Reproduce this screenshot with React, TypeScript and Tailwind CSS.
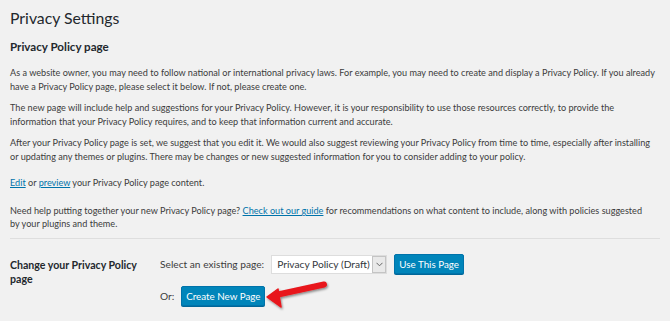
import React from 'react';

const font = { fontFamily: 'Lato, "Noto Sans", Arial, sans-serif' };

function RedArrow() {
  return (
    <svg
      className="absolute left-[262px] top-[278px]"
      width="72"
      height="34"
      viewBox="0 0 72 34"
    >
      <defs>
        <filter id="sh" x="-20%" y="-20%" width="140%" height="160%">
          <feDropShadow dx="1" dy="1.5" stdDeviation="0.8" floodColor="#000" floodOpacity="0.45" />
        </filter>
      </defs>
      <g filter="url(#sh)">
        <path d="M16 16.5 L62 6.5" stroke="#e8161b" strokeWidth="6" strokeLinecap="round" />
        <path d="M5 19 L16 11 L19 29 Z" fill="#e8161b" stroke="#e8161b" strokeWidth="1.5" strokeLinejoin="round" />
      </g>
    </svg>
  );
}

export default function App() {
  return (
    <div
      className="relative min-h-screen bg-[#f1f1f1] text-[#3c3c3c] pl-[10px] pr-[10px] pt-[8px] text-[9.15px] leading-[14px]"
      style={font}
    >
      <h1 className="text-[15.8px] leading-[20px] text-[#23282d]">Privacy Settings</h1>
      <h2 className="mt-[12px] text-[11.6px] leading-[14px] font-bold text-[#23282d]">
        Privacy Policy page
      </h2>

      <p className="mt-[12px] whitespace-nowrap">
        As a website owner, you may need to follow national or international privacy laws. For example, you may
        need to create and display a Privacy Policy. If you already
        <br />
        have a Privacy Policy page, please select it below. If not, please create one.
      </p>
      <p className="mt-[7px] whitespace-nowrap">
        The new page will include help and suggestions for your Privacy Policy. However, it is your responsibility
        to use those resources correctly, to provide the
        <br />
        information that your Privacy Policy requires, and to keep that information current and accurate.
      </p>
      <p className="mt-[7px] whitespace-nowrap">
        After your Privacy Policy page is set, we suggest that you edit it. We would also suggest reviewing your
        Privacy Policy from time to time, especially after installing
        <br />
        or updating any themes or plugins. There may be changes or new suggested information for you to consider
        adding to your policy.
      </p>
      <p className="mt-[12px] whitespace-nowrap">
        <a className="text-[#0073aa] underline">Edit</a> or{' '}
        <a className="text-[#0073aa] underline">preview</a> your Privacy Policy page content.
      </p>
      <p className="mt-[14px] whitespace-nowrap leading-[13px]">
        Need help putting together your new Privacy Policy page?{' '}
        <a className="text-[#0073aa] underline">Check out our guide</a> for recommendations on what content to
        include, along with policies suggested
        <br />
        by your plugins and theme.
      </p>

      <div className="mt-[8px] h-px bg-[#dedede]" />

      <div className="mt-[19px] flex">
        <div className="w-[150px] text-[10.6px] leading-[14px] font-bold text-[#23282d]">
          Change your Privacy Policy
          <br />
          page
        </div>
        <div className="flex flex-col">
          <div className="-mt-[4px] flex items-center">
            <span className="text-[10.2px]">Select an existing page:</span>
            <div className="ml-[7px] flex h-[19px] items-stretch border border-[#ddd] bg-white">
              <span className="flex w-[100px] items-center whitespace-nowrap px-[5px] text-[10.2px] text-[#32373c]">
                Privacy Policy (Draft)
              </span>
              <span className="flex w-[14px] items-center justify-center border border-[#c4c4c4] bg-[#e9e9e9]">
                <svg width="7" height="5" viewBox="0 0 7 5">
                  <path d="M0.5 0.8 L3.5 3.8 L6.5 0.8" fill="none" stroke="#666" strokeWidth="1" />
                </svg>
              </span>
            </div>
            <button
              type="button"
              className="ml-[7px] h-[20px] w-[70px] rounded-[2px] border border-[#0073aa] bg-[#0085ba] text-[9.8px] text-white shadow-[0_1px_0_#006799]"
            >
              Use This Page
            </button>
          </div>
          <div className="mt-[12px] flex items-center">
            <span className="text-[10.2px]">Or:</span>
            <button
              type="button"
              className="ml-[7px] h-[20px] w-[84px] rounded-[2px] border border-[#0073aa] bg-[#0085ba] text-[9.8px] text-white shadow-[0_1px_0_#006799]"
            >
              Create New Page
            </button>
          </div>
        </div>
      </div>

      <RedArrow />
    </div>
  );
}
